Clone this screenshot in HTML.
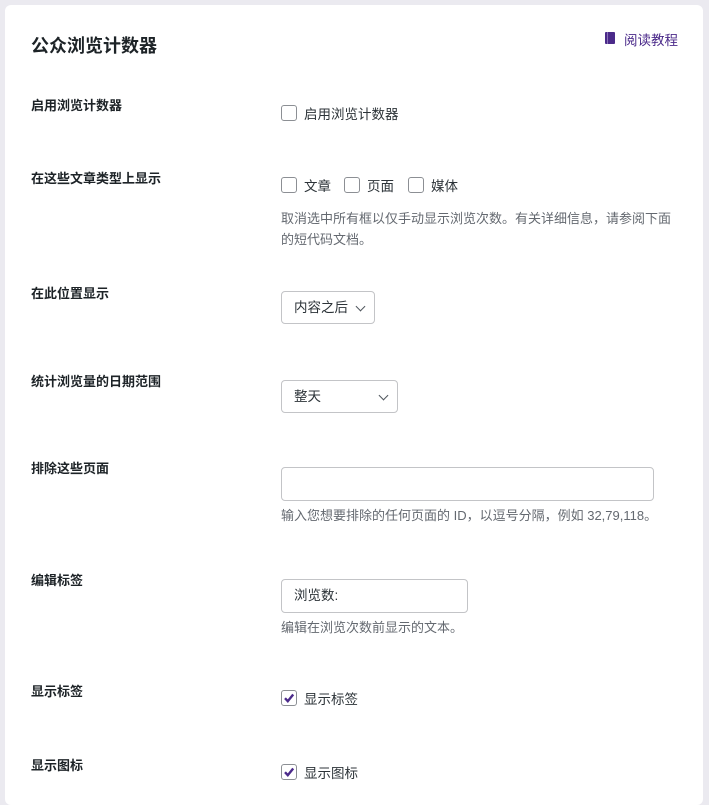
<!DOCTYPE html>
<html><head><meta charset="utf-8"><style>
body{margin:0;background:#ebeaf0;font-family:"Liberation Sans","Noto Sans CJK SC",sans-serif;color:#1d2327;}
.card{position:absolute;left:5px;top:5px;width:698px;height:800px;background:#fff;border-radius:6px;}
.a{position:absolute;white-space:nowrap;}
.t{left:31px;top:32px;font-size:18px;font-weight:bold;}
.lbl{left:31px;font-size:13px;font-weight:bold;}
.cb{position:absolute;width:14px;height:14px;border:1px solid #8c8f94;border-radius:3px;background:#fff;}
.txt{font-size:13.5px;color:#2c3338;}
.desc{left:281px;font-size:13px;color:#646970;line-height:21px;}
.box{position:absolute;border:1px solid #c3c4c7;border-radius:4px;background:#fff;box-sizing:border-box;font-size:13.5px;color:#2c3338;padding-left:12px;}
.chev{position:absolute;width:6px;height:6px;border-right:1.6px solid #50575e;border-bottom:1.6px solid #50575e;transform:rotate(45deg);}
</style></head><body>
<div class="card"></div>
<div class="a t">公众浏览计数器</div>
<div class="a" style="left:605px;top:32px;width:10px;height:12px;background:#4b2a8a;border-radius:1px"></div>
<div class="a" style="left:607px;top:32px;width:1px;height:12px;background:#8a72b8"></div>
<div class="a" style="left:624px;top:29px;font-size:13.5px;color:#4b2a8a">阅读教程</div>

<div class="a lbl" style="top:95px">启用浏览计数器</div>
<div class="cb" style="left:281px;top:105px"></div>
<div class="a txt" style="left:304px;top:103px">启用浏览计数器</div>

<div class="a lbl" style="top:168px">在这些文章类型上显示</div>
<div class="cb" style="left:281px;top:177px"></div>
<div class="a txt" style="left:304px;top:175px">文章</div>
<div class="cb" style="left:344px;top:177px"></div>
<div class="a txt" style="left:367px;top:175px">页面</div>
<div class="cb" style="left:408px;top:177px"></div>
<div class="a txt" style="left:431px;top:175px">媒体</div>
<div class="a desc" style="top:208px">取消选中所有框以仅手动显示浏览次数。有关详细信息，请参阅下面<br>的短代码文档。</div>

<div class="a lbl" style="top:283px">在此位置显示</div>
<div class="box" style="left:281px;top:291px;width:94px;height:33px;line-height:31px">内容之后</div>
<div class="chev" style="left:357px;top:303px"></div>

<div class="a lbl" style="top:371px">统计浏览量的日期范围</div>
<div class="box" style="left:281px;top:380px;width:117px;height:33px;line-height:31px">整天</div>
<div class="chev" style="left:380px;top:392px"></div>

<div class="a lbl" style="top:458px">排除这些页面</div>
<div class="box" style="left:281px;top:467px;width:373px;height:34px"></div>
<div class="a desc" style="top:505px">输入您想要排除的任何页面的 ID，以逗号分隔，例如 32,79,118。</div>

<div class="a lbl" style="top:570px">编辑标签</div>
<div class="box" style="left:281px;top:579px;width:187px;height:34px;line-height:32px">浏览数:</div>
<div class="a desc" style="top:617px">编辑在浏览次数前显示的文本。</div>

<div class="a lbl" style="top:681px">显示标签</div>
<div class="cb" style="left:281px;top:690px"><svg width="14" height="14" viewBox="0 0 14 14" style="position:absolute;left:0;top:0"><path d="M3 7.2l2.8 3L11.2 3.5" fill="none" stroke="#4b2a8a" stroke-width="2.4"/></svg></div>
<div class="a txt" style="left:304px;top:688px">显示标签</div>

<div class="a lbl" style="top:755px">显示图标</div>
<div class="cb" style="left:281px;top:764px"><svg width="14" height="14" viewBox="0 0 14 14" style="position:absolute;left:0;top:0"><path d="M3 7.2l2.8 3L11.2 3.5" fill="none" stroke="#4b2a8a" stroke-width="2.4"/></svg></div>
<div class="a txt" style="left:304px;top:762px">显示图标</div>
</body></html>
